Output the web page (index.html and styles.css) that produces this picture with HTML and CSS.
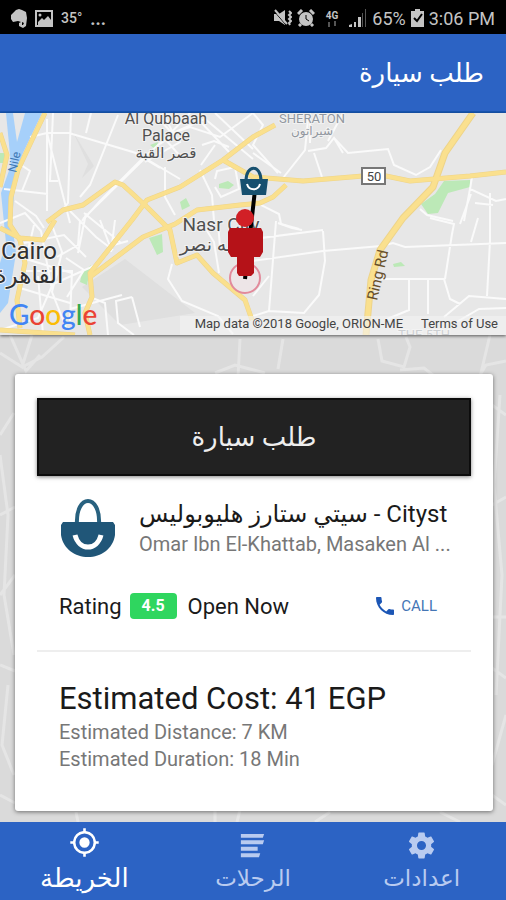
FILE: index.html
```html
<!DOCTYPE html>
<html lang="ar">
<head>
  <meta charset="UTF-8">
  <meta name="viewport" content="width=device-width, initial-scale=1.0">
  <title>طلب سيارة</title>
  <link rel="stylesheet" href="styles.css">
</head>
<body>
  <!-- Status bar -->
  <div class="status-bar">
    <div class="status-group">
      <svg width="16" height="19" viewBox="0 0 16 19" fill="#c4c4c4"><path d="M0 6 5 1l3-1 3 1 4 2 1 6-1 8-3 2-4-2v-3l2-1-3-1-5 1-2-3z"/><path d="m11 13 2 1-1 2h-1z" fill="#000"/></svg>
      <svg width="18" height="17" viewBox="0 0 18 17"><path d="M1 1h16v15H1z" fill="none" stroke="#c4c4c4" stroke-width="2"/><path d="m3 12 4-4 2 2 4-4 3 4v5H3z" fill="#c4c4c4"/><circle cx="5" cy="5" r="1.500" fill="#c4c4c4"/></svg>
      <span class="status-temp">35°</span>
      <span class="status-more">...</span>
    </div>
    <div class="status-group status-right">
      <svg width="18" height="18" viewBox="0 0 18 18"><path d="M0 5h5l6-4v15l-6-4H0z" fill="#c4c4c4"/><path d="m0 2 12 14" stroke="#000"/><path d="m1 1 12 14" stroke="#c4c4c4" stroke-width="2"/><path d="m15 2 2 2-2 2 2 2-2 2 2 2-2 2 1 2" fill="none" stroke="#c4c4c4" stroke-width="2"/></svg>
      <svg width="18" height="18" viewBox="0 0 18 18"><circle cx="9" cy="10" r="7" fill="#c4c4c4"/><path d="m1 5 4-4M17 5l-4-4M4 15l-2 2M14 15l2 2" stroke="#c4c4c4" stroke-width="3"/><path d="M9 6v4l3 2" fill="none" stroke="#000"/></svg>
      <span class="status-network"><b>4G</b><svg width="10" height="6" viewBox="0 0 10 6"><path d="M2 6V1M8 0v5" stroke="#555" stroke-width="2"/></svg></span>
      <svg width="18" height="18" viewBox="0 0 18 18"><path d="M0 18v-2l3-1v3zM5 18v-5h2v5zM9 18V8h3v10z" fill="#c4c4c4"/><path d="M13 18V4h1v14zM16 18V0h1v18z" fill="#555"/></svg>
      <span>65%</span>
      <svg width="13" height="18" viewBox="0 0 13 18"><path d="M4 0h5v2h4v16H0V2h4z" fill="#c4c4c4"/><path d="m3 9 3 3 5-7" fill="none" stroke="#000" stroke-width="2"/></svg>
      <span>3:06 PM</span>
    </div>
  </div>

  <header class="app-header" dir="rtl">
    <h1>طلب سيارة</h1>
  </header>

  <!-- Route map -->
  <section class="map">
    <svg viewBox="0 0 506 222" preserveAspectRatio="xMidYMid slice">
      <rect width="506" height="222" fill="#e7e7e7"/>
      <path d="M6 0h36L22 42l-8 38-2 30 4 30-8 50-8 10v-50l6-20-5-50 10-28z" fill="#a6d0fa"/>
      <path d="m13 0 12 0-8 29z" fill="#e7e7e7"/>
      <path d="m72 17 16 34-6 14 12-12zM125 146l70 54-75 12-38-38z" fill="#dfdfdf"/>
      <path d="M0 40h5v10H0zM149 125l13-4 1 18-6 3zM82 160l9-8-4 20-7-3zM180 89l6-4 4 8-8 4zM219 71l9-3 6 4-5 4-10-1zM421 91l14-10 9-13 26-1v7l-22 6-10 20-10 1zM150 32l8-3-2 8zM393 151l8-2 4 4-11 1z" fill="#bce9b7"/>
      <!-- side streets -->
      <g class="streets">
        <path d="M47 6v92M47 20h22l67 20 44 26M71 0l-3 90-8 10M47 20l23 90M53 0l-3 68h8M118 2 90 72 80 84M91 0l-5 20M30 24l17-4M15 88l21 15 8 12M18 50l12 8-8 20M4 76l44 5"/>
        <path d="M190 0l-30 31 18-13 12-4 30 10 33-24M215 0l38 36M202 32l12-4 15 6M180 43l-15-17-25 22-40 40-18 20M145 45 83 106M165 54v30l10 18M135 40l25 15M201 52l14-20M200 57l12 25 2 26M215 66l2-8 18-4 4 22-18 8-6-10M163 0l10 20 32-14 48 40M197 5l32 34M160 7l20 22-35 20"/>
        <path d="m253 0 10 12-10 20 25 28M253 40l28 20M308 7l-3 30-22 28M308 38l18-3 8-10 9 15 M334 25l14 15 40-4 6 16 22 10 14-8 11-17M310 0v30M314 40l8 24M343 0l-15 28M253 88l26 13 2 10 18 5"/>
        <path d="M0 110l25-10 16 18 10 54 45-20M24 130l40-8 22 22M34 112l-8 34 46 14M50 107l12 32-10 40 15 38M70 98 96 124l17 13M80 108l-2 24-21 12M86 100l-8 40M100 107l10 26 18-5M115 107l-4 32M26 158h46l-2 50M20 175l50 15M38 163l5 58M70 196l52-14M66 145l18 12-17 27M84 100l37 30M0 217l38-12 20-46"/>
        <path d="m172 151-4 15 14 22 36 15 15 18M132 184l-16 4 2 22 16 12M132 184l8 30M90 184l15 6 3 32M204 113l10 16 5 31M218 110l2 24"/>
        <path d="m253 148 70-10 58-5 12-3 12 4 101-4M276 108l-7 90 35 2 15-18 6-34-2-30M253 126l70-9M278 110l14 5 10 2M269 163l-16 20M269 198l-16 5M430 105l24 6-2 10-7 45M478 105l-7 24M490 80v48l-3 55M381 166h63l6 20 10 5M409 167v30l-24 10M428 166v35M444 204l25-21 37 3M455 210l24-14 27-1M472 64l-2 12 26 12 10-2M470 76l-6 32M453 108l-26-6-7-6M471 81l-11 30M475 90l18 2"/>
      </g>
      <!-- main roads -->
      <g class="roads roads-edge">
        <path id="r1" d="M45 0 32 27 18 57l-7 27-1 28 10 15 5 23-8 37 3 28M0 20l7 22-7 32M0 115l20 10 23 2 12-20M0 217l75 5"/>
        <path id="r2" d="m47 109 16-12 20-5 32-23 8 3 24 22 23 23 7 33 20-8 16 18 32 27 7 20"/>
        <path id="r3" d="m90 222-5-22 7-16-2-24 42-53 15-20 33-13 43-27 30-23 22-12"/>
        <path id="r4" d="m90 164 53-40 32-13 22-14 43-5 20-2 13-6 13-12"/>
        <path id="r5" d="m223 47 30 17 50 4 60-5h23l24 5 60-5 36-4"/>
        <path d="m473 0-28 40-12 34-30 31-23 32-9 30-5 55" stroke-width="7"/>
      </g>
      <g class="roads roads-fill">
        <use href="#r1"/><use href="#r2"/><use href="#r3"/><use href="#r4"/><use href="#r5"/>
        <path d="m473 0-28 40-12 34-30 31-23 32-9 30-5 55" stroke-width="5"/>
      </g>
      <g class="place">
        <text x="166" y="11" font-size="16">Al Qubbaah</text>
        <text x="166" y="28" font-size="16">Palace</text>
        <text x="166" y="45" font-size="15">قصر القبة</text>
        <text x="312" y="10" font-size="13" class="district">SHERATON</text>
        <text x="312" y="22" font-size="12" class="district">شيراتون</text>
        <text x="424" y="226" font-size="13" class="district">THE 5TH</text>
        <text x="221" y="118" font-size="19">Nasr City</text>
        <text x="219" y="138" font-size="19">مدينه نصر</text>
        <text x="29" y="146" font-size="24" class="city">Cairo</text>
        <text x="29" y="170" font-size="23" class="city">القاهرة</text>
        <text transform="translate(16 60) rotate(-77)" font-size="12" fill="#4179b5">Nile</text>
        <text transform="translate(377 188) rotate(-77)" font-size="15" fill="#68502b">Ring Rd</text>
      </g>
      <rect x="362" y="55" width="23" height="16" fill="#fff" stroke="#777" stroke-width="2"/>
      <text x="374" y="68" class="shield">50</text>
      <!-- route and markers -->
      <circle cx="245" cy="165" r="15" fill="#f4e4e8" fill-opacity=".5" stroke="#e28a9b" stroke-width="2"/>
      <path d="m255 77-10 89" stroke="#000" stroke-width="4"/>
      <path d="M246 68c0-17 15-17 15 0" fill="none" stroke="#17506f" stroke-width="3"/>
      <path d="M240 66h28l-2 16h-24z" fill="#17506f"/>
      <path d="M247 71c2 7 11 7 13 0" fill="none" stroke="#fff" stroke-width="2"/>
      <circle cx="245" cy="105" r="9" fill="#d12026"/>
      <path d="M230 115h31l2 4v20l-3 5h-6v16l-3 3h-12l-2-3v-16h-6l-3-5v-20z" fill="#b51218"/>
      <rect y="203" x="180" width="326" height="19" fill="#f4f4f4" fill-opacity=".6"/>
      <text x="9" y="212" class="google"><tspan fill="#4285f4">G</tspan><tspan fill="#ea4335">o</tspan><tspan fill="#fbbc05">o</tspan><tspan fill="#4285f4">g</tspan><tspan fill="#34a853">l</tspan><tspan fill="#ea4335">e</tspan></text>
    </svg>
    <div class="map-credits">
      <span>Map data ©2018 Google, ORION-ME</span>
      <a href="#">Terms of Use</a>
    </div>
  </section>

  <main>
    <svg class="backdrop" viewBox="0 0 506 487" preserveAspectRatio="none">
      <path d="m0 18 22 14 10-32M22 32l20-10 22-20M10 0l16 36 14-16M240 4l-2 38M283 4l-5 30M215 38l20-8 30 8M378 4l4 22 22 6 6-20-4-10M400 35l24-2 10 8M490 0l-10 42M506 26l-20 4-6 10M0 100l14-22M0 180l15-8M0 260l15-20M0 330l15 6M0 120l8 60-4 80 10 60M492 70l14 10M492 170l14-8M492 282h14M492 333l14 10M492 430l14-50M500 60l-6 90 8 90-6 120M8 350l-6 60 12 30M76 477l2 10M215 475v12M240 475l-3 12M330 477l-15 10M440 477l20 10M0 460l15 8M492 460l14 10"/>
    </svg>
    <article class="card">
      <button class="order-btn" type="button">طلب سيارة</button>

      <div class="place-row">
        <svg class="bag" viewBox="0 0 54 58">
          <path d="M16 26C14-6 40-6 38 26" fill="none" stroke="#28617f" stroke-width="4"/>
          <path d="M2 23h50l2 3v10C52 50 40 58 27 58S2 50 0 36V26z" fill="#205678"/>
          <path d="M14 36c4 16 22 16 26 0" fill="none" stroke="#fff" stroke-width="5"/>
        </svg>
        <div class="place-text">
          <h2>سيتي ستارز هليوبوليس - Cityst</h2>
          <p>Omar Ibn El-Khattab, Masaken Al ...</p>
        </div>
      </div>

      <div class="rating-row">
        <span>Rating</span>
        <span class="badge">4.5</span>
        <span>Open Now</span>
        <a class="call" href="#">
          <svg width="24" height="24" viewBox="0 0 24 24" fill="#1c56b5"><path d="M6.620 10.790c1.440 2.830 3.760 5.140 6.590 6.590l2.200-2.200c.27-.27.67-.36 1.020-.24 1.120.37 2.330.57 3.570.57.550 0 1 .45 1 1V20c0 .55-.45 1-1 1C10.610 21 3 13.390 3 4c0-.55.45-1 1-1h3.500c.55 0 1 .45 1 1 0 1.250.2 2.450.57 3.570.11.350.03.740-.25 1.020z"/></svg>
          CALL
        </a>
      </div>

      <div class="estimate">
        <h2>Estimated Cost: 41 EGP</h2>
        <p>Estimated Distance: 7 KM</p>
        <p>Estimated Duration: 18 Min</p>
      </div>
    </article>
  </main>

  <nav class="tabs">
    <a href="#" class="tab active">
      <svg viewBox="0 0 24 24"><path d="M12 8a4 4 0 1 0 0 8 4 4 0 0 0 0-8zm8.940 3A8.994 8.994 0 0 0 13 3.060V1h-2v2.060A8.994 8.994 0 0 0 3.060 11H1v2h2.060A8.994 8.994 0 0 0 11 20.940V23h2v-2.060A8.994 8.994 0 0 0 20.940 13H23v-2zM12 19a7 7 0 1 1 0-14 7 7 0 0 1 0 14z"/></svg>
      <span>الخريطة</span>
    </a>
    <a href="#" class="tab">
      <svg viewBox="0 0 24 24"><path d="M3 3h18l-1 3H3zM3 8h18l-1 3H3zM3 13h13v3H3zM3 18h15l-1 3H3z"/></svg>
      <span>الرحلات</span>
    </a>
    <a href="#" class="tab">
      <svg viewBox="0 0 24 24"><path d="M19.430 12.980c.04-.32.07-.64.07-.98s-.03-.66-.07-.98l2.110-1.650c.19-.15.24-.42.12-.64l-2-3.460c-.12-.22-.39-.3-.61-.22l-2.490 1c-.52-.4-1.080-.73-1.690-.98l-.38-2.650A.488.488 0 0 0 14 2h-4c-.25 0-.46.18-.49.42l-.38 2.650c-.61.25-1.170.59-1.690.98l-2.490-1c-.23-.09-.49 0-.61.22l-2 3.460c-.13.22-.07.49.12.64l2.110 1.650c-.04.32-.07.65-.07.98s.03.66.07.98l-2.110 1.650c-.19.15-.24.42-.12.64l2 3.460c.12.22.39.3.61.22l2.490-1c.52.4 1.080.73 1.690.98l.38 2.650c.03.24.24.42.49.42h4c.25 0 .46-.18.49-.42l.38-2.650c.61-.25 1.170-.59 1.690-.98l2.490 1c.23.09.49 0 .61-.22l2-3.460c.12-.22.07-.49-.12-.64zM12 15.500a3.500 3.500 0 1 1 0-7 3.500 3.500 0 0 1 0 7z"/></svg>
      <span>اعدادات</span>
    </a>
  </nav>
</body>
</html>
```
FILE: styles.css
```css
* {
  margin: 0;
  padding: 0;
  box-sizing: border-box;
}
body {
  font-family: Roboto, "DejaVu Sans", sans-serif;
  background-color: #dadada;
  color: #1a1a1a;
  display: flex;
  flex-direction: column;
  min-height: 100vh;
}
a {
  text-decoration: none;
}

/* Status bar */
.status-bar {
  display: flex;
  justify-content: space-between;
  align-items: center;
  height: 34px;
  padding: 2px 11px 0;
  background-color: #000;
  color: #c4c4c4;
  font-size: 18px;
}
.status-group {
  display: flex;
  align-items: center;
  gap: 8px;
}
.status-right {
  gap: 5px;
}
.status-temp {
  font-size: 14px;
  font-weight: 500;
}
.status-more {
  font-weight: 700;
}
.status-network {
  display: flex;
  flex-direction: column;
  align-items: center;
  margin: 0 6px;
  font-size: 10px;
  line-height: 11px;
}

/* Header */
.app-header {
  display: flex;
  align-items: center;
  height: 79px;
  padding: 0 22px;
  background-color: #2c63c4;
  border-bottom: 2px solid #1857b3;
  color: #fff;
}
.app-header h1 {
  font-size: 26px;
  font-weight: 400;
}

/* Map */
.map {
  position: relative;
  height: 222px;
  box-shadow: 0 1px 3px rgba(0, 0, 0, 0.6);
  z-index: 1;
}
.map > svg {
  display: block;
  width: 100%;
  height: 100%;
}
.streets {
  fill: none;
  stroke: #fafafa;
  stroke-width: 2;
}
.roads {
  fill: none;
  stroke-linejoin: round;
}
.roads-edge {
  stroke: #eed48a;
  stroke-width: 5;
}
.roads-fill {
  stroke: #fae08e;
  stroke-width: 4;
}
.place {
  fill: #505050;
  text-anchor: middle;
  stroke: #f2f2f2;
  stroke-width: 2px;
  paint-order: stroke;
}
.place .city {
  fill: #303030;
}
.place .district {
  fill: #9298a0;
}
.place text[transform] {
  text-anchor: start;
  stroke: none;
}
.shield {
  font-size: 13px;
  fill: #444;
  text-anchor: middle;
}
.google {
  font-family: Lato, sans-serif;
  font-size: 28px;
  font-weight: 500;
}
.map-credits {
  position: absolute;
  right: 8px;
  bottom: 3px;
  display: flex;
  gap: 18px;
  font-size: 13px;
  line-height: 16px;
  color: #444;
}
.map-credits a {
  color: #444;
}

/* Card */
main {
  position: relative;
  flex: 1;
  padding: 39px 13px 11px 15px;
}
.backdrop {
  position: absolute;
  inset: 0;
  width: 100%;
  height: 100%;
  fill: none;
  stroke: #e5e5e5;
  stroke-width: 3;
}
.card {
  position: relative;
  height: 100%;
  padding: 24px 22px;
  background-color: #fff;
  border-radius: 3px;
  box-shadow: 0 1px 4px rgba(0, 0, 0, 0.5);
}
.order-btn {
  display: block;
  width: 100%;
  height: 78px;
  background-color: #222;
  border: 2px solid #0c0c0c;
  box-shadow: 0 1px 4px rgba(0, 0, 0, 0.5);
  color: #eee;
  font-family: inherit;
  font-size: 26px;
  cursor: pointer;
}
.place-row {
  display: flex;
  align-items: center;
  gap: 24px;
  margin-top: 22px;
  padding: 0 22px 0 24px;
}
.bag {
  flex: none;
  width: 54px;
  height: 58px;
}
.place-text {
  min-width: 0;
  white-space: nowrap;
}
.place-text h2 {
  font-size: 24px;
  font-weight: 400;
  line-height: 32px;
}
.place-text p {
  font-size: 20px;
  line-height: 28px;
  color: #777;
}
.rating-row {
  display: flex;
  align-items: center;
  height: 64px;
  margin-top: 16px;
  padding: 0 34px 0 22px;
  font-size: 22px;
}
.badge {
  margin: 0 11px 0 8px;
  padding: 0 12px;
  background-color: #2fd65f;
  border-radius: 4px;
  color: #fff;
  font-size: 16px;
  font-weight: 700;
  line-height: 26px;
}
.call {
  display: flex;
  align-items: center;
  gap: 4px;
  margin-left: auto;
  color: #4576b5;
  font-size: 15px;
}
.estimate {
  margin-top: 12px;
  padding: 27px 22px 14px;
  border-top: 2px solid #eee;
}
.estimate h2 {
  font-size: 31px;
  font-weight: 400;
  line-height: 40px;
}
.estimate p {
  font-size: 20px;
  line-height: 27px;
  color: #777;
}

/* Bottom tabs */
.tabs {
  position: relative;
  display: grid;
  grid-template-columns: repeat(3, 1fr);
  height: 78px;
  background-color: #2c63c4;
}
.tab {
  display: flex;
  flex-direction: column;
  align-items: center;
  padding-top: 8px;
  color: #b9cbf0;
  font-size: 23px;
  line-height: 36px;
}
.tab svg {
  flex: none;
  width: 31px;
  height: 31px;
  fill: currentColor;
}
.tab.active {
  padding-top: 5px;
  color: #fff;
  font-size: 26px;
  line-height: 40px;
}
```
